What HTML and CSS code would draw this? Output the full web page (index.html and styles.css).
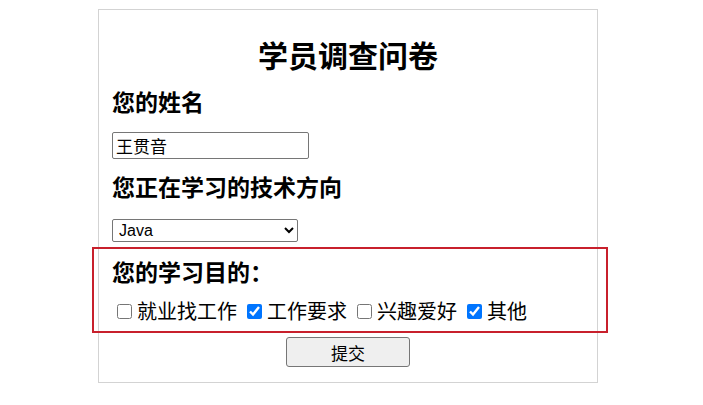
FILE: index.html
```html
<!DOCTYPE html>
<html lang="zh-CN">
<head>
  <meta charset="UTF-8">
  <meta name="viewport" content="width=device-width, initial-scale=1.0">
  <title>学员调查问卷</title>
  <link rel="stylesheet" href="styles.css">
</head>
<body>
  <!-- 问卷表单 -->
  <form class="survey">
    <h1 class="survey-title">学员调查问卷</h1>

    <h2 class="question">您的姓名</h2>
    <input type="text" class="text-input" value="王贯音">

    <h2 class="question">您正在学习的技术方向</h2>
    <select class="select-input">
      <option>Java</option>
      <option>Python</option>
      <option>前端</option>
    </select>

    <!-- 高亮的学习目的区域 -->
    <div class="purpose">
      <h2 class="question purpose-title">您的学习目的：</h2>
      <div class="options">
        <label class="option"><input type="checkbox">就业找工作</label>
        <label class="option"><input type="checkbox" checked>工作要求</label>
        <label class="option"><input type="checkbox">兴趣爱好</label>
        <label class="option"><input type="checkbox" checked>其他</label>
      </div>
    </div>

    <button type="button" class="submit-btn">提交</button>
  </form>
</body>
</html>
```

FILE: styles.css
```css
* {
  box-sizing: border-box;
}

body {
  margin: 0;
  background-color: #ffffff;
  color: #000000;
  font-family: "Noto Sans CJK SC", "Liberation Sans", sans-serif;
}

.survey {
  width: 500px;
  margin: 9px 0 0 98px;
  padding: 0 13px 15px;
  border: 1px solid #d3d3d3;
}

.survey-title {
  margin: 24px 0 0;
  font-size: 30px;
  line-height: 40px;
  font-weight: 700;
  text-align: center;
}

.question {
  margin: 12px 0 0;
  font-size: 23px;
  line-height: 30px;
  font-weight: 700;
}

.text-input {
  display: block;
  width: 197px;
  height: 27px;
  margin-top: 16px;
  padding: 0 3px;
  border: 1px solid #767676;
  border-radius: 2px;
  font-family: "Noto Sans CJK SC", sans-serif;
  font-size: 17px;
  color: #000000;
}

.select-input {
  display: block;
  width: 186px;
  height: 23px;
  margin-top: 18px;
  padding: 0 2px;
  border: 1px solid #767676;
  border-radius: 2px;
  background-color: #ffffff;
  font-family: "Liberation Sans", "Noto Sans CJK SC", sans-serif;
  font-size: 16px;
  color: #000000;
}

.purpose {
  margin: 5px -24px 0 -20px;
  padding: 7px 0 8px 18px;
  border: 2px solid #c8202c;
}

.purpose-title {
  margin-top: 0;
}

.options {
  display: flex;
  margin-top: 13px;
  font-size: 20px;
  line-height: 24px;
}

.option {
  display: inline-flex;
  align-items: center;
  margin-right: 5px;
}

.option input {
  width: 15px;
  height: 15px;
  margin: 0 5px 0 5px;
}

.submit-btn {
  display: block;
  width: 124px;
  height: 30px;
  margin: 4px auto 0;
  border: 1px solid #767676;
  border-radius: 3px;
  background-color: #efefef;
  font-family: "Noto Sans CJK SC", sans-serif;
  font-size: 17px;
  color: #000000;
}
```
